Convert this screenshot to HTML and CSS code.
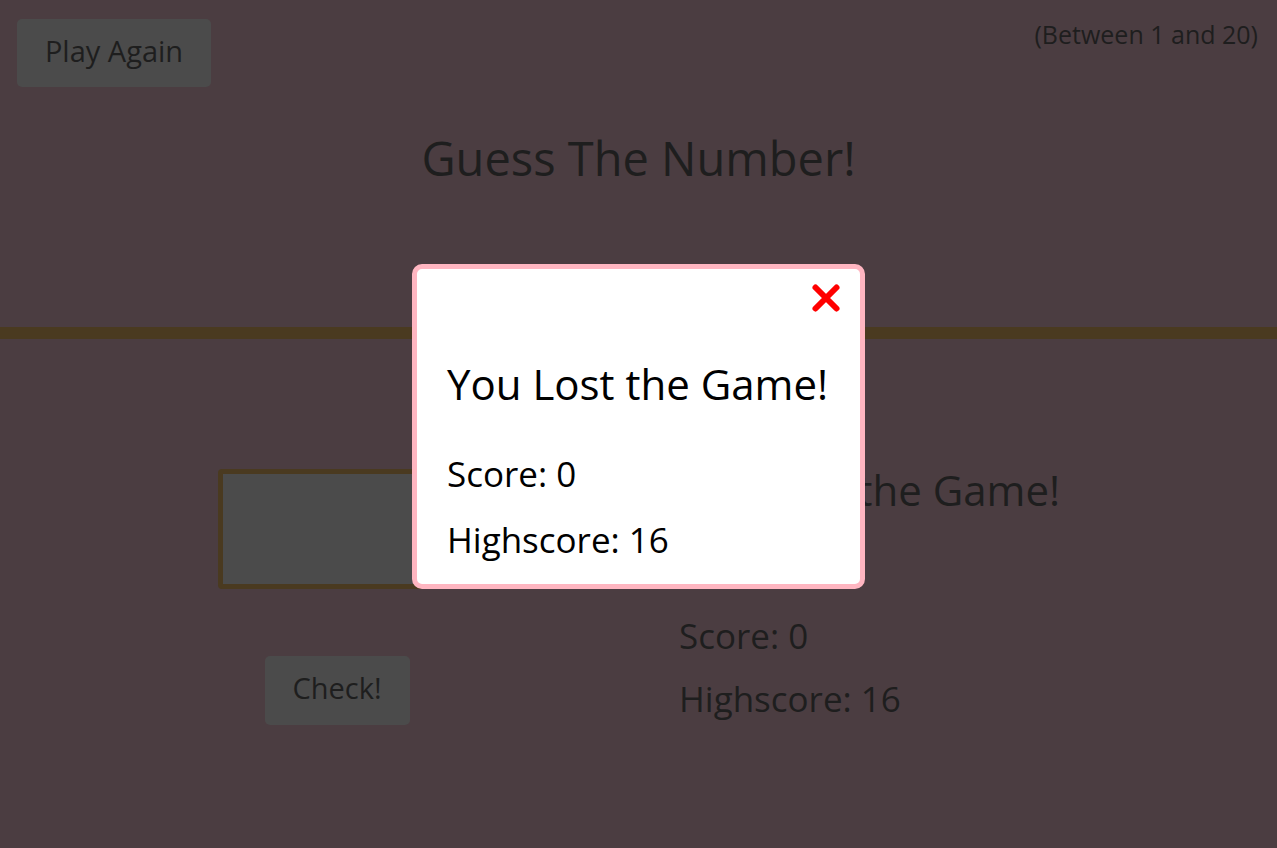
FILE: index.html
```html
<!DOCTYPE html>
<html lang="en">
<head>
<meta charset="utf-8">
<title>Guess The Number!</title>
<link rel="stylesheet" href="styles.css">
</head>
<body>
  <header class="top">
    <div class="top-row">
      <button class="btn play">Play Again</button>
      <p class="range">(Between 1 and 20)</p>
    </div>
    <h1 class="title">Guess The Number!</h1>
  </header>
  <main class="game">
    <section class="left">
      <input class="guess" type="number" aria-label="Your guess">
      <button class="btn check">Check!</button>
    </section>
    <section class="right">
      <p class="message">You Lost the Game!</p>
      <p class="stat stat-score">Score: 0</p>
      <p class="stat stat-high">Highscore: 16</p>
    </section>
  </main>
  <div class="overlay">
    <div class="modal" role="dialog" aria-label="Game over">
      <button class="close" aria-label="Close">
        <svg viewBox="0 0 30 30" width="30" height="30"><path d="M4.5 4.5 L25.5 25.5 M25.5 4.5 L4.5 25.5" stroke="#ff0000" stroke-width="6" stroke-linecap="round" fill="none"/></svg>
      </button>
      <h2 class="modal-title">You Lost the Game!</h2>
      <p class="modal-stat modal-score">Score: 0</p>
      <p class="modal-stat modal-high">Highscore: 16</p>
    </div>
  </div>
</body>
</html>
```
FILE: styles.css
```css
* { box-sizing: border-box; }

body {
  margin: 0;
  background: #4b3d41;
  font-family: "Open Sans", "DejaVu Sans", sans-serif;
  color: #1e1e1e;
  min-height: 848px;
}

.top {
  border-bottom: 12px solid #4a3a20;
  padding-bottom: 145px;
}

.top-row {
  display: flex;
  justify-content: space-between;
  align-items: flex-start;
  padding: 19px 19px 0 17px;
}

.btn {
  font-family: inherit;
  color: #1e1e1e;
  background: #4b4b4b;
  border: none;
  border-radius: 5px;
  font-size: 29px;
  line-height: 1;
  padding: 0 0 6px;
}

.play {
  width: 194px;
  height: 68px;
}

.range {
  margin: 3px 0 0;
  font-size: 25px;
  line-height: 1;
}

.title {
  margin: 48px 0 0;
  font-size: 47px;
  font-weight: 400;
  line-height: 1;
  text-align: center;
}

.game {
  display: grid;
  grid-template-columns: 674px 1fr;
}

.left {
  display: flex;
  flex-direction: column;
  align-items: center;
  padding-top: 130px;
}

.guess {
  width: 238px;
  height: 120px;
  background: #4b4b4b;
  border: 5px solid #4a3a20;
  border-radius: 4px;
  font-family: inherit;
  font-size: 40px;
}

.check {
  margin-top: 67px;
  width: 145px;
  height: 69px;
}

.right {
  padding: 130px 0 0 5px;
}

.message {
  margin: 0;
  font-size: 42px;
  line-height: 1;
}

.stat {
  margin: 0;
  font-size: 35px;
  line-height: 1;
}

.stat-score { margin-top: 107px; }
.stat-high { margin-top: 28px; }

.overlay {
  position: fixed;
  inset: 0;
  display: flex;
  align-items: center;
  justify-content: center;
  padding-top: 4px;
}

.modal {
  width: 453px;
  display: flex;
  flex-direction: column;
  background: #ffffff;
  border: 5px solid #ffb6c1;
  border-radius: 10px;
  padding: 14px 30px 27px;
  color: #000000;
}

.close {
  align-self: flex-end;
  width: 30px;
  height: 30px;
  margin-right: -11px;
  padding: 0;
  border: none;
  background: transparent;
  display: flex;
}

.modal-title {
  margin: 50px 0 0;
  font-size: 42px;
  font-weight: 400;
  line-height: 1;
}

.modal-stat {
  margin: 0;
  font-size: 35px;
  line-height: 1;
}

.modal-score { margin-top: 51px; }
.modal-high { margin-top: 31px; }
```
